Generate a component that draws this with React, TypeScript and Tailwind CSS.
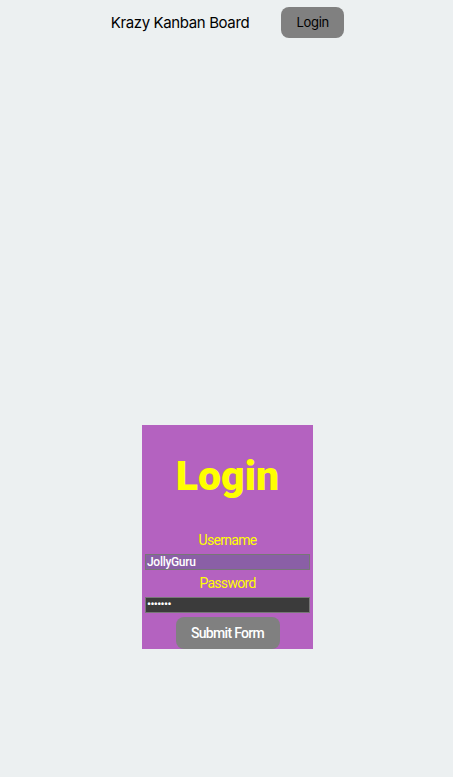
import React, { useState } from 'react';

const App: React.FC = () => {
    const [username, setUsername] = useState('JollyGuru');
    const [password, setPassword] = useState('1234567');

    return (
        <div className="min-h-[777px] bg-[#ecf0f1] font-['Inter',sans-serif]">
            <nav className="flex h-[45px] items-center justify-center gap-8 pl-[2px]">
                <h2 className="pt-[2px] text-[15px] tracking-tight text-black">Krazy Kanban Board</h2>
                <button className="h-[31px] w-[63px] rounded-lg bg-[#808080] text-[13px] tracking-tight text-black">
                    Login
                </button>
            </nav>
            <main className="flex justify-center pt-[380px] pl-[2px]">
                <form
                    className="flex w-[171px] flex-col items-center bg-[#b462c0] px-[3px] font-['Roboto',sans-serif]"
                    onSubmit={(e) => e.preventDefault()}
                >
                    <h1 className="mt-[27px] mb-[32px] text-[41px] font-black leading-[48px] text-[#ffff00]">Login</h1>
                    <label className="text-[14px] leading-[17px] tracking-tighter text-[#ffff00]">Username</label>
                    <input
                        className="mt-[5px] h-[16px] w-full border border-[#777777] bg-[#8a5fa6] px-[1px] text-[12px] font-medium tracking-tight text-white outline-none"
                        value={username}
                        onChange={(e) => setUsername(e.target.value)}
                    />
                    <label className="mt-[5px] text-[14px] leading-[17px] tracking-tighter text-[#ffff00]">Password</label>
                    <input
                        type="password"
                        className="mt-[5px] h-[16px] w-full border border-[#777777] bg-[#3b3b3b] px-[1px] text-[11px] font-bold tracking-tighter text-white outline-none"
                        value={password}
                        onChange={(e) => setPassword(e.target.value)}
                    />
                    <button
                        type="submit"
                        className="mt-[4px] h-[32px] w-[104px] rounded-lg bg-[#808080] text-[14px] font-medium tracking-tighter text-white"
                    >
                        Submit Form
                    </button>
                </form>
            </main>
        </div>
    );
};

export default App;
